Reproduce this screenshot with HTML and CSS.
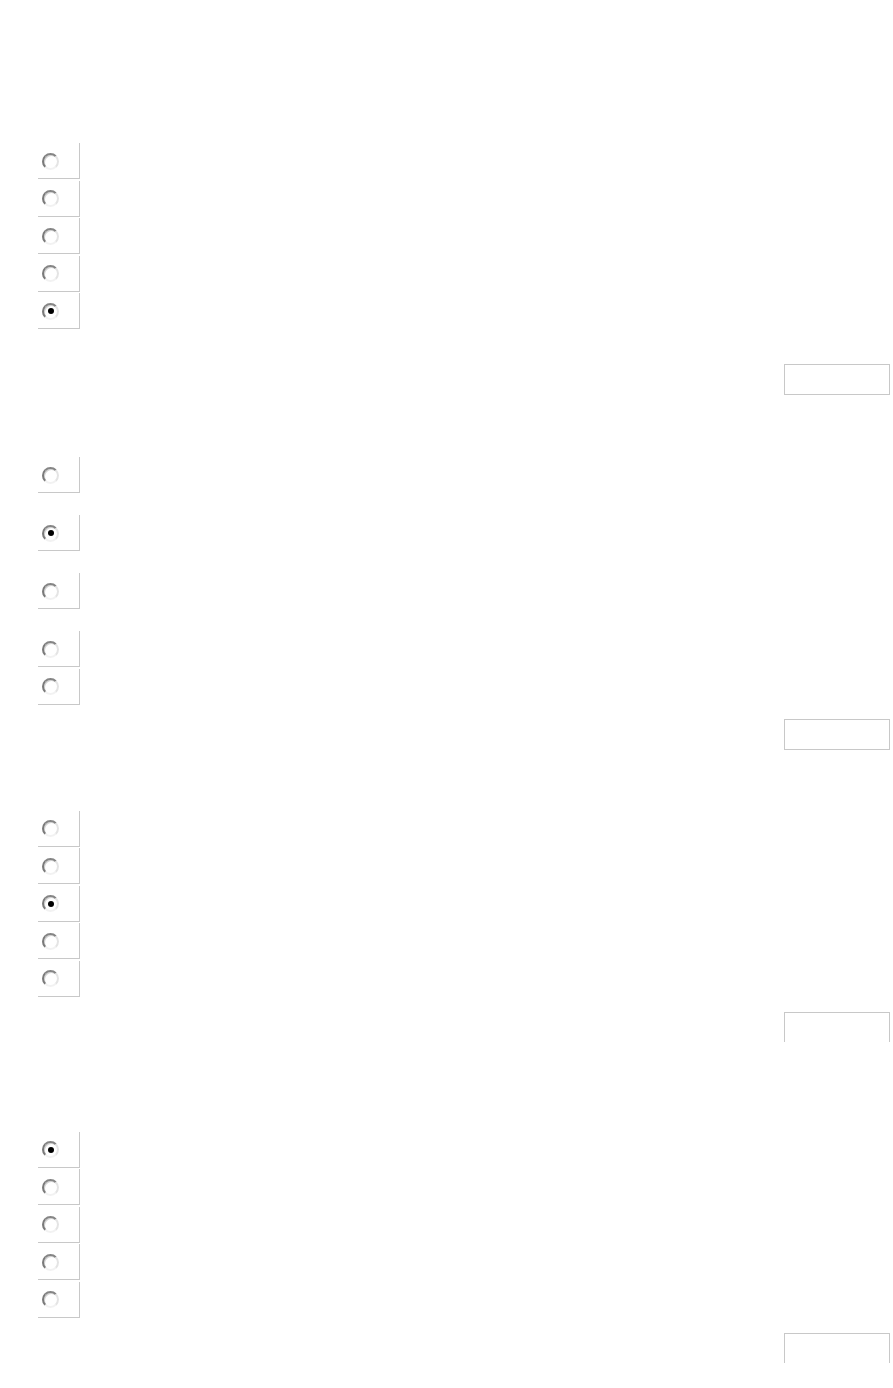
FILE: index.html
```html
<!DOCTYPE html>
<html lang="en">
<head>
    <meta charset="UTF-8">
    <meta name="viewport" content="width=device-width, initial-scale=1.0">
    <title>Quiz</title>
    <link rel="stylesheet" href="styles.css">
</head>
<body>
    <div id="quiz">
        <div class="question" id="question1">
            <div class="option"><input type="radio" name="q1" value="1"></div>
            <div class="option"><input type="radio" name="q1" value="2"></div>
            <div class="option"><input type="radio" name="q1" value="3"></div>
            <div class="option"><input type="radio" name="q1" value="4"></div>
            <div class="option"><input type="radio" name="q1" value="5" checked></div>
            <div class="actions first-actions"><button class="next-button"></button></div>
        </div>

        <div class="question" id="question2">
            <div class="option tall"><input type="radio" name="q2" value="1"></div>
            <div class="option tall"><input type="radio" name="q2" value="2" checked></div>
            <div class="option tall"><input type="radio" name="q2" value="3"></div>
            <div class="option"><input type="radio" name="q2" value="4"></div>
            <div class="option"><input type="radio" name="q2" value="5"></div>
            <div class="actions"><button class="next-button"></button></div>
        </div>

        <div class="question" id="question3">
            <div class="option"><input type="radio" name="q3" value="1"></div>
            <div class="option"><input type="radio" name="q3" value="2"></div>
            <div class="option"><input type="radio" name="q3" value="3" checked></div>
            <div class="option"><input type="radio" name="q3" value="4"></div>
            <div class="option"><input type="radio" name="q3" value="5"></div>
            <div class="actions"><button class="next-button clipped"></button></div>
        </div>

        <div class="question last" id="question4">
            <div class="option"><input type="radio" name="q4" value="1" checked></div>
            <div class="option"><input type="radio" name="q4" value="2"></div>
            <div class="option"><input type="radio" name="q4" value="3"></div>
            <div class="option"><input type="radio" name="q4" value="4"></div>
            <div class="option"><input type="radio" name="q4" value="5"></div>
            <div class="actions"><button class="next-button clipped"></button></div>
        </div>
    </div>
</body>
</html>
```

FILE: styles.css
```css
body {
    font-family: 'Liberation Sans', Arial, sans-serif;
    margin: 0;
    padding: 0;
    background: #fff;
    color: #fff;
}

#quiz {
    padding: 143px 3px 0 38px;
    display: flex;
    flex-direction: column;
}

.question {
    display: flex;
    flex-direction: column;
}

#question2 {
    margin-top: 62px;
}

#question3 {
    margin-top: 61px;
}

#question4 {
    margin-top: 90px;
}

.option {
    width: 41px;
    height: 35px;
    margin-bottom: 1.5px;
    border-right: 1px solid #c8c8c8;
    border-bottom: 1px solid #c8c8c8;
    display: flex;
    align-items: center;
    box-sizing: content-box;
}

.option.tall {
    margin-bottom: 22px;
}

input[type="radio"] {
    appearance: none;
    -webkit-appearance: none;
    width: 17px;
    height: 17px;
    margin: 1px 0 0 4px;
    border: 2px solid;
    border-color: #858585 #e4e4e4 #f2f2f2 #7a7a7a;
    border-radius: 50%;
    background: #fff;
    box-shadow: inset 1px 1px 0 #d4d4d4;
    display: flex;
    align-items: center;
    justify-content: center;
}

input[type="radio"]:checked::after {
    content: "";
    width: 6px;
    height: 6px;
    border-radius: 50%;
    background: #000;
}

.actions {
    display: flex;
    justify-content: flex-end;
    margin-top: 13.5px;
}

#question2 .actions {
    margin-top: 12.5px;
}

.first-actions {
    margin-top: 33.5px;
}

.next-button {
    width: 106px;
    height: 31px;
    padding: 0;
    border: 1px solid #c8c8c8;
    background: #fff;
    box-sizing: border-box;
}

.next-button.clipped {
    height: 30px;
    border-bottom: none;
}
```
